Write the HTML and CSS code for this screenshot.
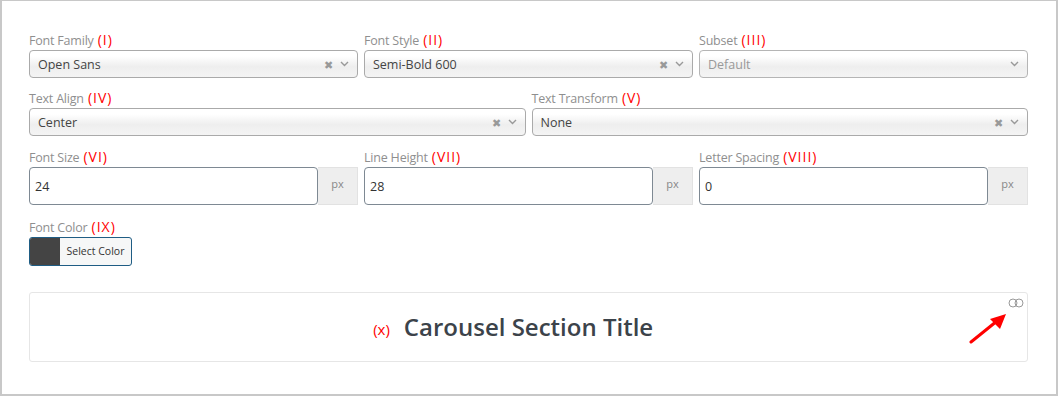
FILE: index.html
```html
<!DOCTYPE html>
<html lang="en">
  <head>
    <meta charset="UTF-8" />
    <title>Typography settings</title>
    <link rel="stylesheet" href="styles.css">
  </head>
  <body>
    <div class="panel">
      <div class="row cols-3">
        <div class="field">
          <label>Font Family <span class="tag">(I)</span></label>
          <div class="select">
            <span class="value">Open Sans</span>
            <span class="clear">&#10006;</span>
            <svg class="chevron" width="9" height="6" viewBox="0 0 9 6"><path d="M1 1l3.5 3.5L8 1" fill="none" stroke="#999" stroke-width="1.4"/></svg>
          </div>
        </div>
        <div class="field">
          <label>Font Style <span class="tag">(II)</span></label>
          <div class="select">
            <span class="value">Semi-Bold 600</span>
            <span class="clear">&#10006;</span>
            <svg class="chevron" width="9" height="6" viewBox="0 0 9 6"><path d="M1 1l3.5 3.5L8 1" fill="none" stroke="#999" stroke-width="1.4"/></svg>
          </div>
        </div>
        <div class="field">
          <label>Subset <span class="tag">(III)</span></label>
          <div class="select disabled">
            <span class="value">Default</span>
            <svg class="chevron" width="9" height="6" viewBox="0 0 9 6"><path d="M1 1l3.5 3.5L8 1" fill="none" stroke="#999" stroke-width="1.4"/></svg>
          </div>
        </div>
      </div>

      <div class="row cols-2">
        <div class="field">
          <label>Text Align <span class="tag">(IV)</span></label>
          <div class="select">
            <span class="value">Center</span>
            <span class="clear">&#10006;</span>
            <svg class="chevron" width="9" height="6" viewBox="0 0 9 6"><path d="M1 1l3.5 3.5L8 1" fill="none" stroke="#999" stroke-width="1.4"/></svg>
          </div>
        </div>
        <div class="field">
          <label>Text Transform <span class="tag">(V)</span></label>
          <div class="select">
            <span class="value">None</span>
            <span class="clear">&#10006;</span>
            <svg class="chevron" width="9" height="6" viewBox="0 0 9 6"><path d="M1 1l3.5 3.5L8 1" fill="none" stroke="#999" stroke-width="1.4"/></svg>
          </div>
        </div>
      </div>

      <div class="row cols-3 row-units">
        <div class="field">
          <label>Font Size <span class="tag">(VI)</span></label>
          <div class="unit-input">
            <input type="text" value="24" />
            <span class="unit">px</span>
          </div>
        </div>
        <div class="field">
          <label>Line Height <span class="tag">(VII)</span></label>
          <div class="unit-input">
            <input type="text" value="28" />
            <span class="unit">px</span>
          </div>
        </div>
        <div class="field">
          <label>Letter Spacing <span class="tag">(VIII)</span></label>
          <div class="unit-input">
            <input type="text" value="0" />
            <span class="unit">px</span>
          </div>
        </div>
      </div>

      <div class="row">
        <div class="field">
          <label>Font Color <span class="tag">(IX)</span></label>
          <button class="color-btn"><span class="swatch"></span><span class="color-text">Select Color</span></button>
        </div>
      </div>

      <div class="preview">
        <div class="preview-title"><span class="tag-x">(x)</span>Carousel Section Title</div>
        <svg class="toggle" width="16" height="10" viewBox="0 0 16 10">
          <circle cx="5" cy="5" r="4" fill="none" stroke="#999" stroke-width="1"/>
          <circle cx="11" cy="5" r="4" fill="none" stroke="#999" stroke-width="1"/>
        </svg>
        <svg class="arrow" width="40" height="34" viewBox="0 0 40 34">
          <path d="M2 31L28 10" stroke="#f00" stroke-width="3" stroke-linecap="round"/>
          <path d="M37 3L21 8L31 18Z" fill="#f00"/>
        </svg>
      </div>
    </div>
  </body>
</html>
```

FILE: styles.css
```css
* {
  box-sizing: border-box;
}

body {
  margin: 0;
  font-family: "Open Sans", "Noto Sans", sans-serif;
  background: #fff;
}

.panel {
  width: 1058px;
  height: 396px;
  border: 2px solid #c8c8c8;
  border-top-width: 1px;
  padding: 31px 28px 0 27px;
  position: relative;
}

.row {
  display: grid;
  column-gap: 6px;
  margin-bottom: 12px;
}

.row-units {
  margin-top: 13px;
  margin-bottom: 14px;
}

.cols-3 {
  grid-template-columns: repeat(3, 1fr);
}

.cols-2 {
  grid-template-columns: repeat(2, 1fr);
}

label {
  display: block;
  font-size: 12.5px;
  line-height: 18px;
  color: #8f8f8f;
  letter-spacing: -0.2px;
}

.tag {
  color: #f00;
  font-size: 14px;
  font-weight: 400;
  line-height: 1;
  margin-left: 1px;
  letter-spacing: 1px;
}

.select {
  display: flex;
  align-items: center;
  height: 28px;
  border: 1px solid #aaa;
  border-radius: 4px;
  background: linear-gradient(#fff 20%, #eee 60%, #f4f4f4);
  padding: 0 8px 0 8px;
  font-size: 12.5px;
  color: #444;
}

.select .value {
  flex: 1;
}

.select.disabled {
  border-color: #b5b5b5;
}

.select.disabled .value {
  color: #999;
}

.clear {
  font-size: 11px;
  color: #999;
  margin-right: 7px;
}

.chevron {
  display: block;
}

.unit-input {
  display: flex;
  height: 38px;
}

.unit-input input {
  flex: 1;
  min-width: 0;
  height: 38px;
  border: 1px solid #7e8993;
  border-radius: 4px;
  padding: 0 5px;
  font-family: inherit;
  font-size: 12.5px;
  color: #333;
  outline: none;
}

.unit {
  width: 40px;
  background: #eee;
  border: 1px solid #e2e2e2;
  border-left: none;
  text-align: center;
  font-size: 11px;
  color: #888;
  padding-top: 8px;
}

.color-btn {
  display: flex;
  height: 29px;
  width: 103px;
  padding: 0;
  border: 1px solid #1f5d84;
  border-radius: 3px;
  background: #f6f7f7;
  overflow: hidden;
  cursor: pointer;
}

.swatch {
  width: 30px;
  height: 100%;
  background: #444;
}

.color-text {
  flex: 1;
  font-family: "Open Sans", sans-serif;
  font-size: 10.5px;
  line-height: 27px;
  color: #333;
  text-align: center;
}

.preview {
  margin-top: 26px;
  height: 70px;
  border: 1px solid #e6e6e6;
  border-radius: 3px;
  display: flex;
  align-items: center;
  justify-content: center;
  position: relative;
}

.preview-title {
  position: relative;
  font-size: 24px;
  font-weight: 600;
  color: #3c434a;
  line-height: 28px;
}

.tag-x {
  position: absolute;
  right: calc(100% + 14px);
  top: 2px;
  font-size: 15px;
  font-weight: 400;
  color: #f00;
}

.toggle {
  position: absolute;
  right: 3px;
  top: 5px;
}

.arrow {
  position: absolute;
  right: 18px;
  top: 18px;
}
```
